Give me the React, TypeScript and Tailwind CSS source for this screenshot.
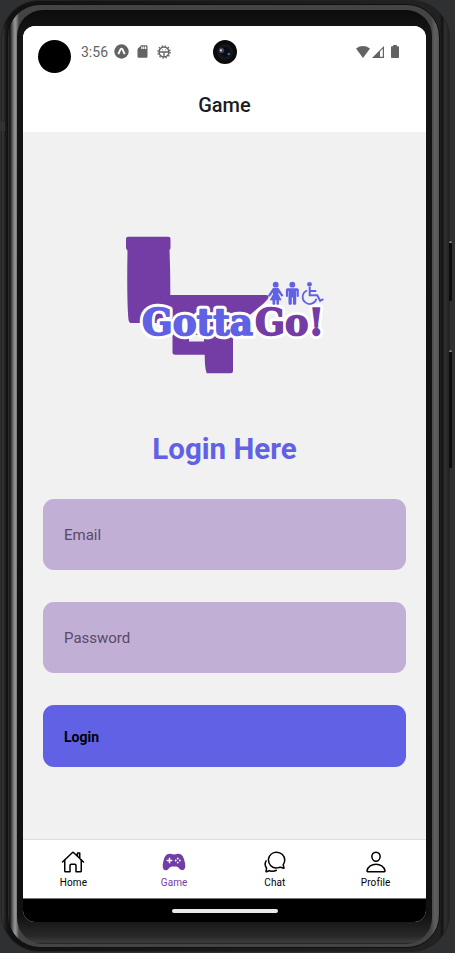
import React from "react";
import {
  IoHomeOutline,
  IoGameController,
  IoChatbubblesOutline,
  IoPersonOutline,
} from "react-icons/io5";
import { MdSdCard } from "react-icons/md";

function StatusBar() {
  return (
    <div className="flex h-[51px] items-center text-[#636363]">
      <div className="mt-[9px] ml-[15px] h-[33px] w-[33px] rounded-full bg-black" />
      <span className="ml-[10px] w-[28px] text-[14px] leading-[16px] whitespace-nowrap">3:56</span>
      <svg className="ml-[5px] h-[15px] w-[15px]" viewBox="0 0 15 15">
        <circle cx="7.5" cy="7.5" r="7.2" fill="#636363" />
        <path d="M4.300 10.200 6.600 5.200Q7.500 4 8.400 5.200L10.700 10.200" fill="none" stroke="#fff" strokeWidth="1.900" />
      </svg>
      <MdSdCard className="ml-[6px] h-[15px] w-[15px]" />
      <svg className="ml-[7px] h-[14px] w-[14px]" viewBox="0 0 14 14" fill="none" stroke="#636363">
        <circle cx="7" cy="7" r="5" strokeWidth="1.5" />
        <circle cx="7" cy="7" r="6.2" strokeWidth="1.2" strokeDasharray="1.4 1.846" />
        <path d="M2 7h10M7 7v5" strokeWidth="1.3" />
        <path d="M5 4.8h.8M8.3 4.8h.8" strokeWidth="1" />
      </svg>
      <div className="ml-[42px] flex h-[24px] w-[24px] items-center justify-center rounded-full bg-[#0b0b0d]">
        <svg className="h-[24px] w-[24px]" viewBox="0 0 24 24">
          <circle cx="12" cy="12" r="8" fill="#15171c" />
          <circle cx="12" cy="12" r="5" fill="#090d16" />
          <circle cx="8.5" cy="10.5" r="2.7" fill="#3f4450" />
          <circle cx="8" cy="10.3" r="1.1" fill="#d9dbe2" />
          <circle cx="15.8" cy="14" r="1.3" fill="#3469a6" />
        </svg>
      </div>
      <svg className="ml-[119px] h-[12px] w-[14px]" viewBox="0 0 14 12">
        <path d="M0 2.400Q7-2.400 14 2.400L7 12z" fill="#636363" />
      </svg>
      <svg className="ml-[2px] h-[12px] w-[12px]" viewBox="0 0 12 12">
        <path d="M12 0v12H0z" fill="#636363" />
        <path d="M8 5.5 10.8 2.7v8H8z" fill="#fff" />
      </svg>
      <svg className="ml-[7px] h-[13px] w-[8px]" viewBox="0 0 8 13">
        <path d="M2.200 0h3.600v1.300H7.200q.8 0 .8.800V12.200q0 .8-.8.800H.8Q0 13 0 12.200V2.100q0-.8.8-.8h1.400z" fill="#636363" />
      </svg>
    </div>
  );
}

function Wordmark() {
  return (
    <>
      <text x="142" y="335" fill="#6161e5" textLength="111" lengthAdjust="spacingAndGlyphs">Gotta</text>
      <text x="255" y="335" fill="#743da6" textLength="69" lengthAdjust="spacingAndGlyphs">Go!</text>
    </>
  );
}

function Logo() {
  return (
    <svg className="h-[144px] w-[208px]" viewBox="122 232 208 144">
      <path
        d="M128 236.700h40.500q2 0 2 2v9q0 1.500-1 2.200.9 22 .8 45.100H266q4 0 2 3.400-1 1.900-5 5.600l-12 10-18 14v43q0 2.300-2.300 2.300h-24q-2-5-2-18.600h-29.500q-2.700 0-2.700-2V323h-41.500q-2.400 0-2.700-5-1.600-20-.8-67.500-1.500-1-1.500-3v-8.600q0-2.200 2-2.200z"
        fill="#743da6"
      />
      <path d="M189 335h15v6.500h-15z" fill="#f1f1f1" />
      <g fontFamily="'DejaVu Serif', serif" fontWeight="700" fontSize="37" strokeLinejoin="round">
        <g stroke="#fff" strokeWidth="7.500">
          <Wordmark />
        </g>
        <Wordmark />
        <g stroke="#6161e5" strokeWidth="1.500">
          <text x="142" y="335" fill="#6161e5" textLength="111" lengthAdjust="spacingAndGlyphs">Gotta</text>
        </g>
        <g stroke="#743da6" strokeWidth="1.500">
          <text x="255" y="335" fill="#743da6" textLength="69" lengthAdjust="spacingAndGlyphs">Go!</text>
        </g>
      </g>
      <g fill="#6161e5">
        <circle cx="275.700" cy="284.700" r="2.900" />
        <path d="M273 288h5.400l5 7.500-1.700 1.200-3.300-4.200v1.800l3.300 6H279v3.700q0 .8-1 .8h-.8q-.8 0-.8-.8v-3.700h-1.200v3.700q0 .8-.8.800h-1q-.9 0-.9-.8v-3.700h-2.800l3.300-6v-1.800l-3.300 4.200-1.800-1.200z" />
        <circle cx="292.300" cy="284.700" r="2.900" />
        <path d="M287.500 288.200h9.600q1.700 0 1.700 1.600v6.200q0 .9-1.100.9-1 0-1-.9v-5h-.5v13q0 .8-1 .8h-1.300q-1 0-1-.8v-6.500h-1.100v6.500q0 .8-1 .8h-1.300q-1 0-1-.8v-13h-.5v5q0 .9-1 .9-1.100 0-1.100-.9v-6.200q0-1.600 1.600-1.600z" />
      </g>
      <g fill="none" stroke="#6161e5" strokeWidth="2">
        <circle cx="309.500" cy="284.300" r="2.400" fill="#6161e5" stroke="none" />
        <path d="M309.700 287v8.200h7.500l3 5.600 3.200-1.600M310 291h6.300" />
        <path d="M307 290.500a7 7 0 1 0 9.400 8.300" strokeWidth="1.700" />
      </g>
    </svg>
  );
}

const tabs = [
  { label: "Home", Icon: IoHomeOutline, color: "text-black" },
  { label: "Game", Icon: IoGameController, color: "text-[#743da6]" },
  { label: "Chat", Icon: IoChatbubblesOutline, color: "text-black" },
  { label: "Profile", Icon: IoPersonOutline, color: "text-black" },
];

function Screen() {
  return (
    <div className="flex h-[896px] w-[403px] flex-col overflow-hidden rounded-[12px] bg-[#f1f1f1]">
      <header className="flex h-[106px] flex-col bg-white">
        <StatusBar />
        <h1 className="mt-[15px] text-center text-[20px] leading-[26px] font-medium text-[#1c1c1e]">Game</h1>
      </header>
      <main className="flex h-[707px] flex-col px-[20px]">
        <div className="mt-[100px] ml-[79px]">
          <Logo />
        </div>
        <h2 className="mt-[55px] text-center text-[29.5px] leading-[36px] font-bold text-[#6161e5]">Login Here</h2>
        <div className="mt-[32px] flex h-[71px] items-center rounded-[11px] bg-[#c1afd6] px-[21px] pt-[2px] text-[15px] text-[#594a66]">
          Email
        </div>
        <div className="mt-[32px] flex h-[71px] items-center rounded-[11px] bg-[#c1afd6] px-[21px] pt-[2px] text-[15px] text-[#594a66]">
          Password
        </div>
        <button className="mt-[32px] flex h-[62px] items-center rounded-[11px] bg-[#6161e5] px-[21px] pt-[2px] text-[14px] font-bold text-black">
          Login
        </button>
      </main>
      <nav className="flex h-[60px] border-t border-b border-t-[#dddddd] border-b-[#777] bg-white">
        {tabs.map(({ label, Icon, color }) => (
          <div key={label} className={`flex flex-1 flex-col items-center pt-[10px] ${color}`}>
            <Icon className="h-[24px] w-[24px]" />
            <span className="mt-[2px] text-[10px] leading-[13px] tracking-[0.1px]">{label}</span>
          </div>
        ))}
      </nav>
      <div className="flex h-[23px] items-center justify-center bg-black">
        <div className="h-[4px] w-[106px] rounded-full bg-[#e9e9e9]" />
      </div>
    </div>
  );
}

export default function App() {
  return (
    <div className="relative h-[953px] w-[455px] overflow-hidden bg-[#2f3032] pl-[1px] font-[Roboto,sans-serif]">
      <div className="absolute top-[241px] left-[449px] h-[60px] w-[3px] rounded-sm border-t-2 border-[#777] bg-[#0b0b0b]" />
      <div className="absolute top-[350px] left-[449px] h-[118px] w-[3px] rounded-sm border-t-2 border-[#777] bg-[#0b0b0b]" />
      <div className="absolute top-[122px] left-0 h-[9px] w-[5px] bg-[#333]" />
      <div className="h-[952px] w-[449px] rounded-[38px] border border-[#222] bg-[linear-gradient(90deg,#3a3a3a_0,#181818_4px,#111_8px,#222_438px,#111_440px,#303030_443px,#202020_448px)] pt-[3px] pl-[5px]">
        <div className="h-[944px] w-[433px] rounded-[33px] border border-[#101010] bg-[linear-gradient(90deg,#333_0,#151515_2px,#555_4px,#999_7px,#777_9px,#444_11px,#444_423px,#606060_427px,#555_431px)] pt-[5px] pl-[9px]">
          <div className="h-[934px] w-[415px] rounded-[26px] bg-[linear-gradient(180deg,#0c0c0c_0,#141414_20px,#111_905px,#1c1c1c_915px,#282828_926px,#3c3c3c_932px,#222_934px)] pt-[16px] pl-[6px]">
            <Screen />
          </div>
        </div>
      </div>
    </div>
  );
}
